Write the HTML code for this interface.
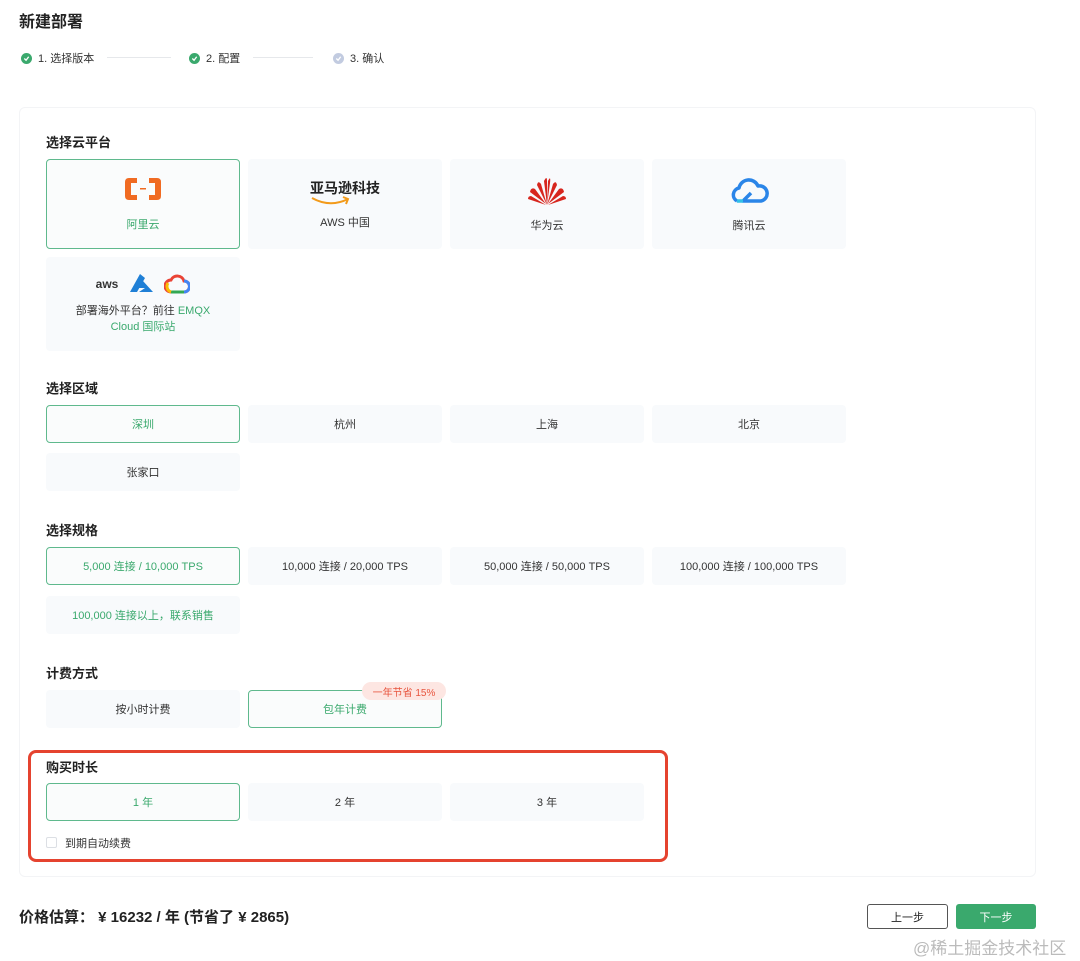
<!DOCTYPE html>
<html><head><meta charset="utf-8"><style>
*{margin:0;padding:0;box-sizing:border-box}
body{width:1080px;height:961px;background:#fff;font-family:"Liberation Sans","Noto Sans CJK SC",sans-serif;color:#222;position:relative;overflow:hidden}
.a{position:absolute}
.t{font-size:13px;font-weight:bold;color:#222}
.b{position:absolute;width:194px;height:38px;background:#f8fafc;border-radius:4px;font-size:11px;color:#333;display:flex;align-items:center;justify-content:center}
.s{background:#fafcfc;border:1px solid #5fb98d;color:#3aa96d}
.step{font-size:11px;color:#333;display:flex;align-items:center;gap:6px}
.dot{width:11px;height:11px;border-radius:50%;background:#3aa96d;display:flex;align-items:center;justify-content:center}
.line{position:absolute;height:1px;background:#e6e8eb;top:57px}
</style></head><body>
<div class="a" style="left:19px;top:8px;font-size:16px;font-weight:bold">新建部署</div>
<div class="a step" style="left:21px;top:50px"><span class="dot"><svg width="7" height="7" viewBox="0 0 8 8"><path d="M1.5 4l2 2 3-4" stroke="#fff" stroke-width="1.5" fill="none"/></svg></span>1. 选择版本</div>
<div class="line" style="left:107px;width:64px"></div>
<div class="a step" style="left:189px;top:50px"><span class="dot"><svg width="7" height="7" viewBox="0 0 8 8"><path d="M1.5 4l2 2 3-4" stroke="#fff" stroke-width="1.5" fill="none"/></svg></span>2. 配置</div>
<div class="line" style="left:253px;width:60px"></div>
<div class="a step" style="left:333px;top:50px"><span class="dot" style="background:#c2cbe0"><svg width="7" height="7" viewBox="0 0 8 8"><path d="M1.5 4l2 2 3-4" stroke="#fff" stroke-width="1.5" fill="none"/></svg></span>3. 确认</div>

<div class="a" style="left:19px;top:107px;width:1017px;height:770px;border:1px solid #f3f4f6;border-radius:6px"></div>

<div class="a t" style="left:46px;top:132px">选择云平台</div>
<div class="b s" style="left:46px;top:159px;height:90px;flex-direction:column;gap:14px">
<svg width="40" height="26" viewBox="0 0 40 26"><path d="M14 2H6Q2 2 2 6v14q0 4 4 4h8v-5H8V7h6zM26 2h8q4 0 4 4v14q0 4-4 4h-8v-5h6V7h-6z" fill="#f06b22"/><rect x="17" y="12" width="6" height="1.5" fill="#f06b22"/></svg><span>阿里云</span></div>
<div class="b" style="left:248px;top:159px;height:90px;flex-direction:column;gap:8px">
<div style="position:relative;font-size:14px;font-weight:bold;color:#222;height:28px">亚马逊科技<svg class="a" style="left:0;top:17px" width="44" height="12" viewBox="0 0 44 12"><path d="M2 3q18 10 36 1M33 2l5 2-2 5" stroke="#f29a1a" stroke-width="2" fill="none"/></svg></div><span>AWS 中国</span></div>
<div class="b" style="left:450px;top:159px;height:90px;flex-direction:column;gap:12px">
<svg width="40" height="30" viewBox="0 0 40 30"><g fill="#d7261e"><path d="M20 30L17 6q3-6 3 0z"/><path d="M20 30L21 6q3-6 2 2z"/><path d="M20 30L10 10q1-5 4-1z"/><path d="M20 30L26 9q3-4 4 1z"/><path d="M19 29L3 17q1-5 5-3z"/><path d="M21 29L32 14q4-2 5 3z"/><path d="M19 30L1 24q0-3 3-3z"/><path d="M21 30L36 21q3 0 3 3z"/></g></svg><span>华为云</span></div>
<div class="b" style="left:652px;top:159px;height:90px;flex-direction:column;gap:12px">
<svg width="40" height="30" viewBox="0 0 40 30"><path d="M8 26a7 7 0 0 1 2-13a10 10 0 0 1 19-2a7.5 7.5 0 0 1 3 15H14l8-8" stroke="#2a85e8" stroke-width="3.5" fill="none" stroke-linejoin="round"/><path d="M8 26h6" stroke="#33c0e8" stroke-width="3.5"/></svg><span>腾讯云</span></div>
<div class="b" style="left:46px;top:257px;height:94px;flex-direction:column;gap:8px;line-height:16px;text-align:center">
<div style="display:flex;gap:10px;align-items:center"><span style="font-size:12px;color:#333;font-weight:bold">aws</span><svg width="26" height="22" viewBox="0 0 26 22"><path d="M12 1L2 19h7l8-14zM15 8l-4 7 6 0-6 4h14z" fill="#1f7fd6"/></svg><svg width="26" height="22" viewBox="0 0 26 22"><path d="M7 19a6 6 0 0 1 0-12a7 7 0 0 1 13 1a5.5 5.5 0 0 1 0 11z" fill="none" stroke="#ea4335" stroke-width="3"/><path d="M7 19h13" stroke="#34a853" stroke-width="3"/><path d="M20 8a5.5 5.5 0 0 1 0 11" stroke="#4285f4" stroke-width="3" fill="none"/><path d="M4 10a6 6 0 0 0 3 9" stroke="#fbbc05" stroke-width="3" fill="none"/></svg></div>
<div>部署海外平台？前往 <span style="color:#3aa96d">EMQX</span><br><span style="color:#3aa96d">Cloud 国际站</span></div></div>

<div class="a t" style="left:46px;top:378px">选择区域</div>
<div class="b s" style="left:46px;top:405px">深圳</div>
<div class="b" style="left:248px;top:405px">杭州</div>
<div class="b" style="left:450px;top:405px">上海</div>
<div class="b" style="left:652px;top:405px">北京</div>
<div class="b" style="left:46px;top:453px">张家口</div>

<div class="a t" style="left:46px;top:520px">选择规格</div>
<div class="b s" style="left:46px;top:547px">5,000 连接 / 10,000 TPS</div>
<div class="b" style="left:248px;top:547px">10,000 连接 / 20,000 TPS</div>
<div class="b" style="left:450px;top:547px">50,000 连接 / 50,000 TPS</div>
<div class="b" style="left:652px;top:547px">100,000 连接 / 100,000 TPS</div>
<div class="b" style="left:46px;top:596px;color:#3aa96d">100,000 连接以上，联系销售</div>

<div class="a t" style="left:46px;top:663px">计费方式</div>
<div class="b" style="left:46px;top:690px">按小时计费</div>
<div class="b s" style="left:248px;top:690px">包年计费</div>
<div class="a" style="left:362px;top:682px;width:84px;height:18px;background:#fde6e2;color:#e8553e;font-size:10px;border-radius:9px;display:flex;align-items:center;justify-content:center">一年节省 15%</div>

<div class="a" style="left:28px;top:750px;width:640px;height:112px;border:3px solid #e5432f;border-radius:8px"></div>
<div class="a t" style="left:46px;top:757px">购买时长</div>
<div class="b s" style="left:46px;top:783px">1 年</div>
<div class="b" style="left:248px;top:783px">2 年</div>
<div class="b" style="left:450px;top:783px">3 年</div>
<div class="a" style="left:46px;top:837px;width:11px;height:11px;border:1px solid #dcdfe4;border-radius:2px"></div>
<div class="a" style="left:65px;top:835px;font-size:11px;color:#333">到期自动续费</div>

<div class="a" style="left:19px;top:906px;font-size:15px;font-weight:bold">价格估算： ¥ 16232 / 年 (节省了 ¥ 2865)</div>
<div class="a" style="left:867px;top:904px;width:81px;height:25px;border:1px solid #555;border-radius:3px;font-size:11px;display:flex;align-items:center;justify-content:center">上一步</div>
<div class="a" style="left:956px;top:904px;width:80px;height:25px;background:#3aa96d;color:#fff;border-radius:3px;font-size:11px;display:flex;align-items:center;justify-content:center">下一步</div>
<div class="a" style="left:913px;top:934px;font-size:17px;color:#bbb">@稀土掘金技术社区</div>
</body></html>
